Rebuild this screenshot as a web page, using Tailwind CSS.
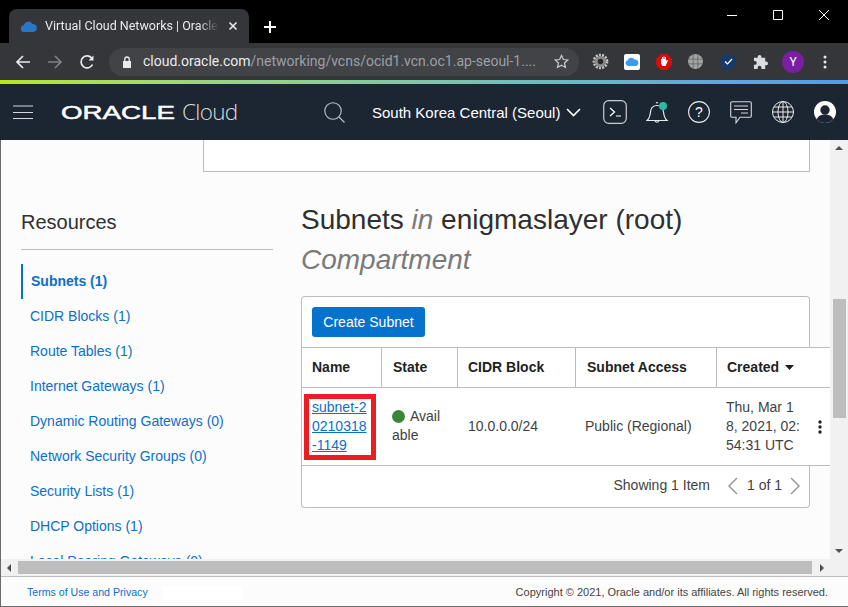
<!DOCTYPE html>
<html lang="en">
<head>
  <meta charset="UTF-8" />
  <title>Virtual Cloud Networks | Oracle Cloud</title>
  <script src="https://cdn.jsdelivr.net/npm/@tailwindcss/browser@4"></script>
</head>
<body class="w-[848px] h-[607px] overflow-hidden flex flex-col bg-black font-['Liberation_Sans',Arial,sans-serif]">

  <!-- browser tab strip -->
  <div class="h-[43px] shrink-0 flex items-end pl-[9px] bg-black">
    <div class="w-[240px] h-[34px] bg-[#35363a] rounded-t-[8px] flex items-center pl-[12px] pr-[11px] font-['Roboto',sans-serif] text-[12.5px] text-[#e8eaed]">
      <svg class="w-[16px] h-[11px] shrink-0" viewBox="0 0 16 11"><path fill="#2a76c6" d="M3.5 11a3.4 3.4 0 0 1-.6-6.8A4.6 4.6 0 0 1 11.4 3 3.9 3.9 0 0 1 12.2 11z"/></svg>
      <span class="ml-[8px] w-[174px] overflow-hidden whitespace-nowrap [mask-image:linear-gradient(to_right,black_88%,transparent)]">Virtual Cloud Networks | Oracle Cloud</span>
      <svg class="ml-auto w-[10px] h-[10px]" viewBox="0 0 10 10"><path stroke="#e8eaed" stroke-width="1.6" d="M1.5 1.5l7 7M8.5 1.5l-7 7"/></svg>
    </div>
    <svg class="ml-[15px] mb-[10px] w-[12px] h-[12px]" viewBox="0 0 12 12"><path stroke="#fff" stroke-width="2" d="M6 0v12M0 6h12"/></svg>
    <div class="ml-auto mr-[1px] self-start flex pt-[9px] text-white">
      <svg class="w-[46px] h-[12px]" viewBox="0 0 46 12"><path stroke="#fff" d="M18 6.5h10"/></svg>
      <svg class="w-[46px] h-[12px]" viewBox="0 0 46 12"><path stroke="#fff" fill="none" d="M18.5 1.5h9v9h-9z"/></svg>
      <svg class="w-[46px] h-[12px]" viewBox="0 0 46 12"><path stroke="#fff" d="M18 1l10 10M28 1L18 11"/></svg>
    </div>
  </div>

  <!-- browser toolbar -->
  <div class="h-[37px] shrink-0 bg-[#35363a] flex items-center">
    <svg class="ml-[15px] w-[16px] h-[16px]" viewBox="0 0 16 16" fill="none"><path stroke="#e8eaed" stroke-width="1.7" d="M15 8H2M8 2L2 8l6 6"/></svg>
    <svg class="ml-[16px] w-[16px] h-[16px]" viewBox="0 0 16 16" fill="none"><path stroke="#7f8184" stroke-width="1.7" d="M1 8h13M8 2l6 6-6 6"/></svg>
    <svg class="ml-[16px] w-[16px] h-[16px]" viewBox="0 0 16 16" fill="none"><path stroke="#e8eaed" stroke-width="1.7" d="M13.5 10.5A6 6 0 1 1 13 4.5"/><path fill="#e8eaed" d="M14.5 1.5v5h-5z"/></svg>
    <div class="ml-[14px] w-[470px] h-[28px] rounded-full bg-[#424346] flex items-center pl-[13px] font-['Roboto',sans-serif] text-[14px] whitespace-nowrap">
      <svg class="w-[10px] h-[12px] shrink-0" viewBox="0 0 10 12"><path fill="#e8eaed" d="M1 5h8v7H1z"/><path fill="none" stroke="#e8eaed" stroke-width="1.3" d="M2.8 5V3.2a2.2 2.2 0 0 1 4.4 0V5"/></svg>
      <span class="ml-[11px] text-[#e8eaed]">cloud.oracle.com</span><span class="text-[#9aa0a6]">/networking/vcns/ocid1.vcn.oc1.ap-seoul-1....</span>
      <svg class="ml-auto mr-[10px] w-[15px] h-[15px] shrink-0" viewBox="0 0 16 16"><path fill="none" stroke="#c8cacc" stroke-width="1.3" d="M8 1.5l2 4.4 4.7.5-3.5 3.2 1 4.7L8 11.9l-4.2 2.4 1-4.7L1.3 6.4 6 5.9z"/></svg>
    </div>
    <svg class="ml-[13px] w-[17px] h-[17px]" viewBox="0 0 16 16"><circle cx="8" cy="8" r="5.8" fill="none" stroke="#c4c4c4" stroke-width="3.2" stroke-dasharray="1.8 1"/><circle cx="8" cy="8" r="5.4" fill="#8a8a8a"/><circle cx="8" cy="8" r="2.6" fill="#2a2a2a"/></svg>
    <div class="ml-[15px] w-[16px] h-[16px] rounded-[2px] bg-white flex items-center justify-center">
      <svg class="w-[14px] h-[9px]" viewBox="0 0 16 10"><path fill="#3d9be9" d="M3.5 10a3.2 3.2 0 0 1-.5-6.3A4.4 4.4 0 0 1 11 2.8 3.6 3.6 0 0 1 12.3 10z"/></svg>
    </div>
    <svg class="ml-[16px] w-[16px] h-[16px]" viewBox="0 0 16 16"><path fill="#d80c0c" d="M5 0h6l5 5v6l-5 5H5l-5-5V5z"/><path fill="#fff" d="M5 5h1V3h1v2h.5V2.500h1V5H9V3h1v4l1-1 1 .5L9.500 12H6.500L5 9.500z"/></svg>
    <svg class="ml-[16px] w-[15px] h-[15px]" viewBox="0 0 16 16"><circle cx="8" cy="8" r="8" fill="#a3a3a3"/><path stroke="#5f6163" stroke-width=".8" fill="none" d="M0 5.500h16M0 10.500h16M5.500 0v16M10.500 0v16"/></svg>
    <div class="ml-[17px] w-[16px] h-[16px] rounded-full bg-[#173a66] flex items-center justify-center">
      <svg class="w-[9px] h-[7px]" viewBox="0 0 9 7"><path fill="none" stroke="#fff" stroke-width="1.200" d="M1 3.500l2.500 2.500L8 1"/></svg>
    </div>
    <svg class="ml-[17px] w-[15px] h-[15px]" viewBox="0 0 16 16"><path fill="#dadce0" d="M1 4h4V3a2 2 0 0 1 4 0v1h4v4h1a2 2 0 0 1 0 4h-1v4H9v-1.500a2 2 0 0 0-4 0V16H1v-4.500h1a2 2 0 0 0 0-4H1z"/></svg>
    <div class="ml-[14px] w-[22px] h-[22px] rounded-full bg-[#7b1fa2] flex items-center justify-center text-white text-[12px] font-['Roboto',sans-serif]">Y</div>
    <svg class="ml-[19px] w-[4px] h-[14px]" viewBox="0 0 4 14"><circle cx="2" cy="2" r="1.500" fill="#e8eaed"/><circle cx="2" cy="7" r="1.500" fill="#e8eaed"/><circle cx="2" cy="12" r="1.500" fill="#e8eaed"/></svg>
  </div>

  <!-- loading strip -->
  <div class="h-[4px] shrink-0 bg-gradient-to-r from-[#b5e61d] via-[#7fc4a8] to-[#4f9cf0]"></div>

  <!-- oracle header -->
  <header class="h-[56px] shrink-0 bg-[#1c2532] flex items-center text-white">
    <svg class="ml-[13px] w-[20px] h-[14px]" viewBox="0 0 20 14"><path stroke="#d5d8dc" d="M0 1h20M0 7.500h20M0 13.500h20"/></svg>
    <svg class="ml-[28px] w-[114px] h-[20px] shrink-0" viewBox="0 0 114 20"><text x="0" y="17" textLength="114" lengthAdjust="spacingAndGlyphs" font-family="Liberation Sans" font-size="19" stroke="#fff" stroke-width=".5" fill="#fff">ORACLE</text></svg>
    <span class="ml-[7px] w-[56px] text-[22.5px] font-light text-[#d8dbdf] font-['Open_Sans',sans-serif] tracking-[-0.7px]">Cloud</span>
    <svg class="ml-[86px] w-[21px] h-[21px]" viewBox="0 0 21 21" fill="none"><circle cx="9" cy="9" r="8.200" stroke="#c2c6cb" stroke-width="1.100"/><path stroke="#c2c6cb" stroke-width="1.100" d="M15 15l5.500 5.500"/></svg>
    <span class="ml-[27px] mt-[2px] w-[189px] text-[15px] whitespace-nowrap">South Korea Central (Seoul)</span>
    <svg class="ml-[5px] w-[15px] h-[9px]" viewBox="0 0 15 9" fill="none"><path stroke="#fff" stroke-width="1.600" d="M1 1l6.500 6.500L14 1"/></svg>
    <svg class="ml-[22px] w-[24px] h-[24px]" viewBox="0 0 24 24" fill="none"><rect x=".7" y=".7" width="22.600" height="22.600" rx="5" stroke="#c9ccd0" stroke-width="1.200"/><path stroke="#fff" stroke-width="1.200" d="M7 8l4.500 4L7 16M13 16h5"/></svg>
    <svg class="ml-[19px] w-[23px] h-[25px]" viewBox="0 0 23 25" fill="none"><path stroke="#e8e9eb" stroke-width="1.200" d="M1 20.500c2.500-2 3-4 3.500-8.500.4-4 2.500-6.500 6.500-6.500s6 2.500 6.500 6.500c.5 4.500 1 6.500 3.500 8.500zM10 3a1.500 1.500 0 0 1 2 0M9 21a2.300 2.300 0 0 0 4 0"/><circle cx="17" cy="6" r="4" fill="#2fb8a0"/></svg>
    <svg class="ml-[19px] w-[22px] h-[22px]" viewBox="0 0 22 22" fill="none"><circle cx="11" cy="11" r="10.400" stroke="#e8e9eb" stroke-width="1.100"/><text x="11" y="16" text-anchor="middle" font-family="Liberation Sans" font-size="14" fill="#fff">?</text></svg>
    <svg class="ml-[20px] w-[22px] h-[23px]" viewBox="0 0 22 23" fill="none"><path stroke="#d5d8dc" stroke-width="1.100" d="M2 .7h18a1.300 1.300 0 0 1 1.300 1.300v13a1.300 1.300 0 0 1-1.300 1.300H10l-4 5.500v-5.500H2A1.300 1.300 0 0 1 .7 15V2A1.300 1.300 0 0 1 2 .7z"/><path stroke="#d5d8dc" d="M4 5h14M4 8.500h14M11 12h7"/></svg>
    <svg class="ml-[20px] w-[22px] h-[22px]" viewBox="0 0 22 22" fill="none" stroke="#e8e9eb" stroke-width="1"><circle cx="11" cy="11" r="10.500"/><ellipse cx="11" cy="11" rx="5" ry="10.500"/><path d="M11 .5v21M.5 11h21M2 6h18M2 16h18"/></svg>
    <svg class="ml-[20px] w-[22px] h-[22px]" viewBox="0 0 22 22"><defs><clipPath id="userClip"><circle cx="11" cy="11" r="11"/></clipPath></defs><circle cx="11" cy="11" r="11" fill="#fff"/><g clip-path="url(#userClip)" fill="#1c2532"><circle cx="11" cy="9" r="4.700"/><path d="M2 22c0-6 4-8.500 9-8.500s9 2.500 9 8.500z"/></g></svg>
  </header>

  <!-- page viewport -->
  <div class="flex-1 min-h-0 flex flex-col bg-[#fcfcfc] border-l border-[#6b6b6b]">
    <div class="flex-1 min-h-0 flex">
      <div class="flex-1 min-w-0 overflow-hidden">
        <div class="ml-[202px] mr-[20px] h-[32px] bg-white border-x border-b border-[#b9bcc1]"></div>
        <div class="flex">
          <!-- resources nav -->
          <aside class="ml-[20px] w-[252px] shrink-0">
            <h2 class="mt-[36px] h-[41px] text-[20px] leading-[28px] text-[#2f2f2f]">Resources</h2>
            <div class="h-px bg-[#b9bcc1]"></div>
            <ul class="mt-[14px] text-[14px] text-[#0b6fcb]">
              <li class="h-[35px] flex items-center pl-[8px] border-l-2 border-[#0572ce] font-bold">Subnets (1)</li>
              <li class="h-[35px] flex items-center pl-[9px]">CIDR Blocks (1)</li>
              <li class="h-[35px] flex items-center pl-[9px]">Route Tables (1)</li>
              <li class="h-[35px] flex items-center pl-[9px]">Internet Gateways (1)</li>
              <li class="h-[35px] flex items-center pl-[9px]">Dynamic Routing Gateways (0)</li>
              <li class="h-[35px] flex items-center pl-[9px]">Network Security Groups (0)</li>
              <li class="h-[35px] flex items-center pl-[9px]">Security Lists (1)</li>
              <li class="h-[35px] flex items-center pl-[9px]">DHCP Options (1)</li>
              <li class="h-[35px] flex items-center pl-[9px]">Local Peering Gateways (0)</li>
            </ul>
          </aside>

          <!-- subnets panel -->
          <main class="ml-[28px] w-[529px] shrink-0">
            <h1 class="mt-[28px] w-[509px] text-[28px] leading-[40px] text-[#2f2f2f]">Subnets <i class="text-[#7a7a7a]">in</i> enigmaslayer (root) <i class="block text-[#7a7a7a]">Compartment</i></h1>
            <div class="mt-[16px] w-[509px] h-[51px] bg-white border-x border-t border-[#b9bcc1] rounded-t-[4px] pt-[10px] pl-[10px]">
              <button class="w-[113px] h-[30px] bg-[#0572ce] rounded-[3px] text-white text-[14px]">Create Subnet</button>
            </div>
            <div class="h-[119px] bg-white border-l border-y border-[#b9bcc1] text-[14px] text-[#3f3f3f]">
              <div class="h-[40px] flex items-center font-bold text-[#1f1f1f] border-b border-[#b9bcc1]">
                <div class="w-[80px] h-full flex items-center pl-[10px] border-r border-[#b9bcc1]">Name</div>
                <div class="w-[76px] h-full flex items-center pl-[11px] border-r border-[#b9bcc1]">State</div>
                <div class="w-[118px] h-full flex items-center pl-[10px] border-r border-[#b9bcc1]">CIDR Block</div>
                <div class="w-[141px] h-full flex items-center pl-[11px] border-r border-[#b9bcc1]">Subnet Access</div>
                <div class="flex items-center pl-[10px]">Created
                  <svg class="ml-[6px] w-[9px] h-[5px]" viewBox="0 0 9 5"><path fill="#1f1f1f" d="M0 0h9L4.500 5z"/></svg>
                </div>
              </div>
              <div class="h-[77px] flex items-center">
                <div class="w-[80px] pl-[2px]">
                  <div class="w-[72px] h-[66px] border-[5px] border-[#ed1c24] pl-[3px] leading-[19px]">
                    <a class="block -mt-px text-[#0b6fcb] underline break-all">subnet-20210318-1149</a>
                  </div>
                </div>
                <div class="w-[76px] pl-[10px] pb-[2px] leading-[19px]"><span class="inline-block w-[13px] h-[13px] rounded-full bg-[#3a873a] align-[-2px] mr-[5px]"></span>Avail<br>able</div>
                <div class="w-[118px] pl-[10px]">10.0.0.0/24</div>
                <div class="w-[141px] pl-[9px] whitespace-nowrap">Public (Regional)</div>
                <div class="w-[101px] pl-[9px] leading-[19px] whitespace-nowrap">Thu, Mar 1<br>8, 2021, 02:<br>54:31 UTC</div>
                <svg class="w-[4px] h-[14px]" viewBox="0 0 4 14"><circle cx="2" cy="2" r="1.700" fill="#222"/><circle cx="2" cy="7" r="1.700" fill="#222"/><circle cx="2" cy="12" r="1.700" fill="#222"/></svg>
              </div>
            </div>
            <div class="w-[509px] h-[42px] pb-[2px] bg-white border-x border-b border-[#b9bcc1] rounded-b-[4px] flex items-center justify-end text-[14px] text-[#3f3f3f]">
              <span>Showing 1 Item</span>
              <svg class="ml-[17px] w-[11px] h-[18px]" viewBox="0 0 11 18" fill="none"><path stroke="#9a9a9a" stroke-width="1.500" d="M10 1L2 9l8 8"/></svg>
              <span class="ml-[9px]">1 of 1</span>
              <svg class="ml-[8px] mr-[8px] w-[11px] h-[18px]" viewBox="0 0 11 18" fill="none"><path stroke="#9a9a9a" stroke-width="1.500" d="M1 1l8 8-8 8"/></svg>
            </div>
          </main>
        </div>
      </div>
      <!-- vertical scrollbar -->
      <div class="w-[18px] shrink-0 bg-[#f1f1f1] flex flex-col items-center">
        <svg class="mt-[6px] w-[8px] h-[4px]" viewBox="0 0 8 4"><path fill="#505050" d="M4 0l4 4H0z"/></svg>
        <div class="mt-[149px] w-[13px] h-[119px] bg-[#bdbdbd]"></div>
        <svg class="mt-auto mb-[6px] w-[8px] h-[4px]" viewBox="0 0 8 4"><path fill="#505050" d="M0 0h8L4 4z"/></svg>
      </div>
    </div>
    <!-- horizontal scrollbar -->
    <div class="h-[17px] shrink-0 bg-[#f1f1f1] flex items-center">
      <svg class="ml-[6px] w-[4px] h-[8px]" viewBox="0 0 4 8"><path fill="#505050" d="M4 0v8L0 4z"/></svg>
      <div class="ml-[7px] w-[794px] h-[13px] bg-[#bdbdbd]"></div>
      <svg class="ml-[8px] w-[4px] h-[8px]" viewBox="0 0 4 8"><path fill="#505050" d="M0 0l4 4-4 4z"/></svg>
    </div>
    <!-- footer -->
    <footer class="h-[31px] shrink-0 pt-[2px] bg-[#fcfcfc] border-t border-b border-t-[#b9bcc1] border-b-[#6b6b6b] flex items-center pl-[26px] pr-[20px] text-[11px] text-[#444]">
      <a class="text-[10.6px] text-[#0b6fcb]">Terms of Use and Privacy</a>
      <span class="ml-[15px] w-[80px] h-[14px] bg-white"></span>
      <span class="ml-auto">Copyright © 2021, Oracle and/or its affiliates. All rights reserved.</span>
    </footer>
  </div>
</body>
</html>
